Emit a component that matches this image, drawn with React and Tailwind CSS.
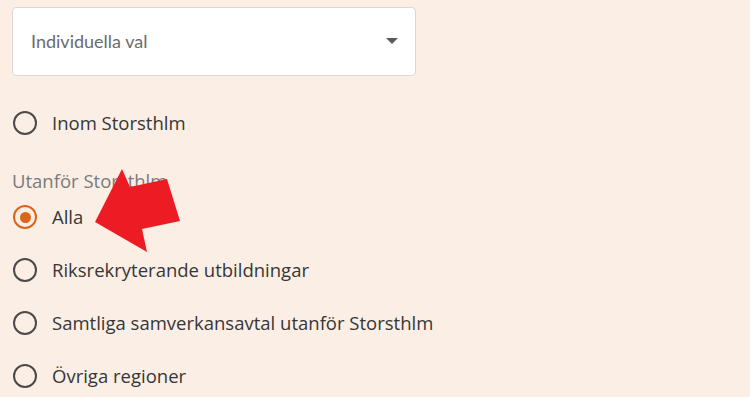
const Radio = ({ label, checked }) => (
  <label className="flex items-center gap-[15px] h-[53px] pl-[1px]">
    <span
      className={`w-[24px] h-[24px] rounded-full border-[2.5px] flex items-center justify-center shrink-0 ${
        checked ? 'border-[#d9661c]' : 'border-[#4a4a4a]'
      }`}
    >
      {checked && <span className="w-[11px] h-[11px] rounded-full bg-[#d9661c]" />}
    </span>
    <span className="text-[18.5px] text-[#363636]" style={{ fontFamily: '"Open Sans", sans-serif' }}>
      {label}
    </span>
  </label>
)

export default function App() {
  return (
    <div
      className="relative w-[750px] h-[397px] bg-[#fbeee5] overflow-hidden px-[12px] pt-[7px]"
      style={{ fontFamily: 'Lato, "Open Sans", sans-serif' }}
    >
      {/* Select */}
      <div className="w-[404px] h-[69px] bg-white rounded-[4px] border border-[#dcd6d2] flex items-center justify-between pl-[18px] pr-[17px]">
        <span className="text-[18px] text-[#6b6b6b]">Individuella val</span>
        <svg width="12" height="7" viewBox="0 0 12 7">
          <path d="M0 0 L12 0 L6 6 Z" fill="#5a5a5a" />
        </svg>
      </div>

      <div className="mt-[20px]">
        <Radio label="Inom Storsthlm" />
      </div>

      <div
        className="mt-[23px] text-[18.5px] text-[#7a7a7a] leading-none"
        style={{ fontFamily: '"Open Sans", sans-serif' }}
      >
        Utanför Storsthlm
      </div>

      <div className="mt-0">
        <Radio label="Alla" checked />
        <Radio label="Riksrekryterande utbildningar" />
        <Radio label="Samtliga samverkansavtal utanför Storsthlm" />
        <Radio label="Övriga regioner" />
      </div>

      {/* Red arrow annotation */}
      <svg className="absolute left-0 top-0 pointer-events-none" width="750" height="397">
        <polygon
          points="95,222 122,169 130,187 167,179 180,221 142,229 147,252"
          fill="#ed1c24"
        />
      </svg>
    </div>
  )
}
